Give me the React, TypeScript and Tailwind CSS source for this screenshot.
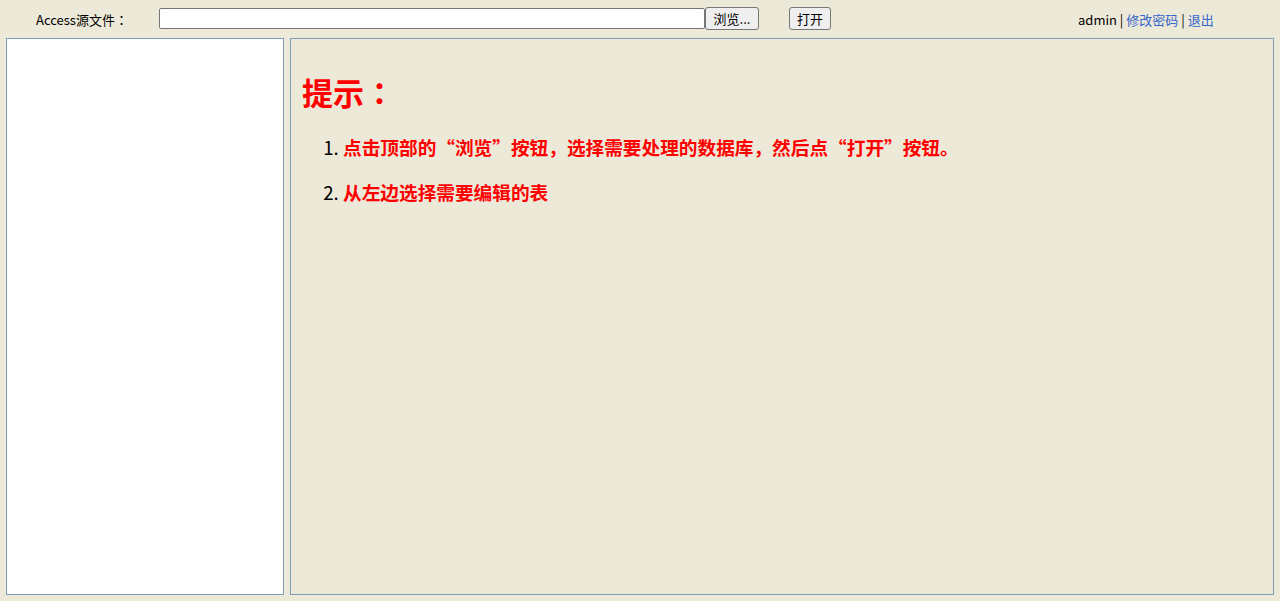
export default function App() {
  const font = { fontFamily: '"Noto Sans CJK SC", "Noto Sans", sans-serif' };
  return (
    <div className="w-[1280px] h-[601px] bg-[#ECE9D8] text-black overflow-hidden [text-spacing-trim:space-all]" style={font}>
      <div className="h-[38px] flex items-center text-[13px]">
        <span className="pl-[36px] w-[159px] shrink-0 leading-none">
          Access源文件<span className="[font-family:'Noto_Sans_CJK_JP',sans-serif]">：</span>
        </span>
        <input
          type="text"
          className="w-[546px] h-[21px] -mt-[1px] bg-white border border-[#767676] rounded-[2px] shrink-0"
        />
        <button className="w-[54px] h-[23px] -mt-[1px] bg-[#EFEFEF] border border-[#767676] rounded-[3px] text-[13px] leading-none shrink-0">
          浏览...
        </button>
        <button className="ml-[30px] w-[42px] h-[23px] -mt-[1px] bg-[#EFEFEF] border border-[#767676] rounded-[3px] text-[13px] leading-none shrink-0">
          打开
        </button>
        <div className="ml-[247px] leading-none">
          admin <span>|</span> <a className="text-[#3366CC]">修改密码</a> <span>|</span>{" "}
          <a className="text-[#3366CC]">退出</a>
        </div>
      </div>
      <div className="flex gap-[6px] px-[6px] h-[557px]">
        <div className="w-[278px] shrink-0 bg-white border border-[#7F9DB9]"></div>
        <div className="flex-1 border border-[#7F9DB9] pl-[11px]">
          <h2 className="text-[31px] font-bold text-[#FF0000] mt-[33px] leading-[40px]">
            提示<span className="[font-family:'Noto_Sans_CJK_JP',sans-serif]">：</span>
          </h2>
          <ol className="list-decimal ml-[41px] mt-[22px] text-[18.67px]">
            <li className="leading-[26px] mb-[19px]">
              <span className="font-bold text-[#FF0000]">
                点击顶部的“浏览”按钮，选择需要处理的数据库，然后点“打开”按钮。
              </span>
            </li>
            <li className="leading-[26px]">
              <span className="font-bold text-[#FF0000]">从左边选择需要编辑的表</span>
            </li>
          </ol>
        </div>
      </div>
    </div>
  );
}
